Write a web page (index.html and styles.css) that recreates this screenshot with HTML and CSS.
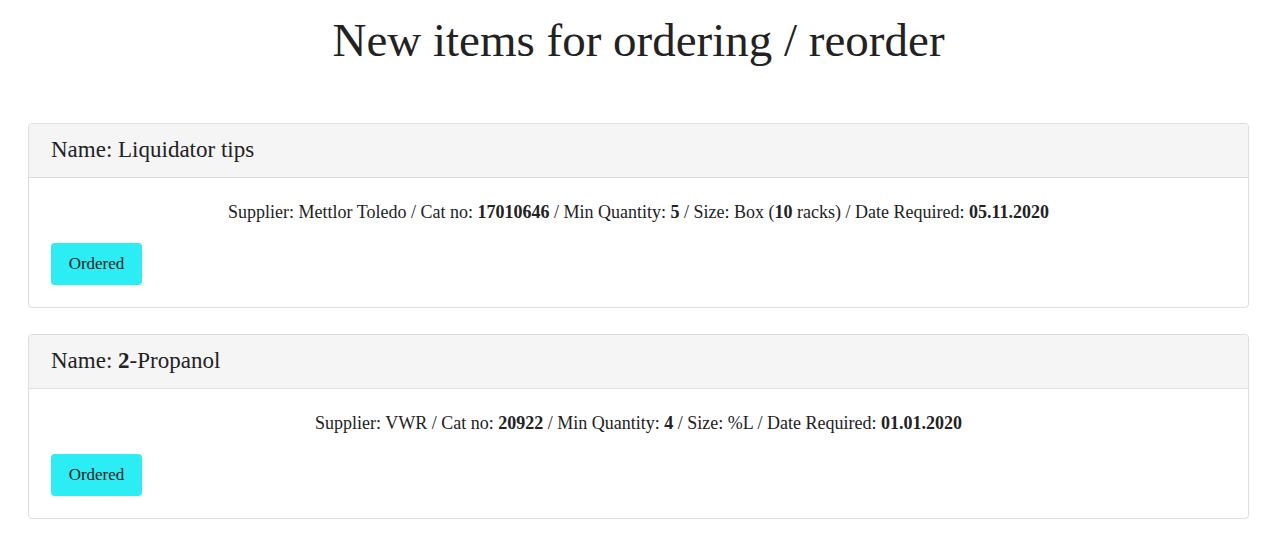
FILE: index.html
```html
<!DOCTYPE html>
<html>
<head>
<meta charset="utf-8">
<link rel="stylesheet" href="styles.css">
</head>
<body>
<div class="page">
  <h1 class="title">New items for ordering / reorder</h1>
  <div class="card">
    <div class="card-header">Name: Liquidator tips</div>
    <div class="card-body">
      <p class="details">Supplier: Mettlor Toledo / Cat no: <b>17010646</b> / Min Quantity: <b>5</b> / Size: Box (<b>10</b> racks) / Date Required: <b>05.11.2020</b></p>
      <button class="btn">Ordered</button>
    </div>
  </div>
  <div class="card">
    <div class="card-header">Name: <b class="num">2</b>-Propanol</div>
    <div class="card-body">
      <p class="details">Supplier: VWR / Cat no: <b>20922</b> / Min Quantity: <b>4</b> / Size: %L / Date Required: <b>01.01.2020</b></p>
      <button class="btn">Ordered</button>
    </div>
  </div>
</div>
</body>
</html>
```

FILE: styles.css
```css
html, body {
  margin: 0;
  padding: 0;
  background: #fff;
}
body {
  font-family: "Liberation Serif", "DejaVu Serif", serif;
  color: #222;
}
.page {
  padding: 12px 30px 0 28px;
}
.title {
  margin: 0 0 55px;
  text-align: center;
  font-weight: normal;
  font-size: 47px;
  line-height: 56px;
  color: #222;
}
.card {
  border: 1px solid #ddd;
  border-radius: 4px;
  margin-bottom: 26px;
  background: #fff;
}
.card-header {
  background: #f5f5f5;
  border-bottom: 1px solid #ddd;
  border-radius: 4px 4px 0 0;
  padding: 0 22px;
  height: 53px;
  line-height: 52px;
  font-size: 23px;
}
.num {
  font-weight: bold;
}
.card-body {
  padding: 22px 22px 22px;
}
.details {
  margin: 0 0 19px;
  text-align: center;
  font-size: 18px;
  line-height: 24px;
}
.details b {
  font-weight: bold;
}
.btn {
  display: block;
  width: 91px;
  height: 42px;
  border: none;
  border-radius: 4px;
  background: #2dedf4;
  color: #222;
  font-family: "Liberation Serif", "DejaVu Serif", serif;
  font-size: 17px;
  padding: 0;
}
```
